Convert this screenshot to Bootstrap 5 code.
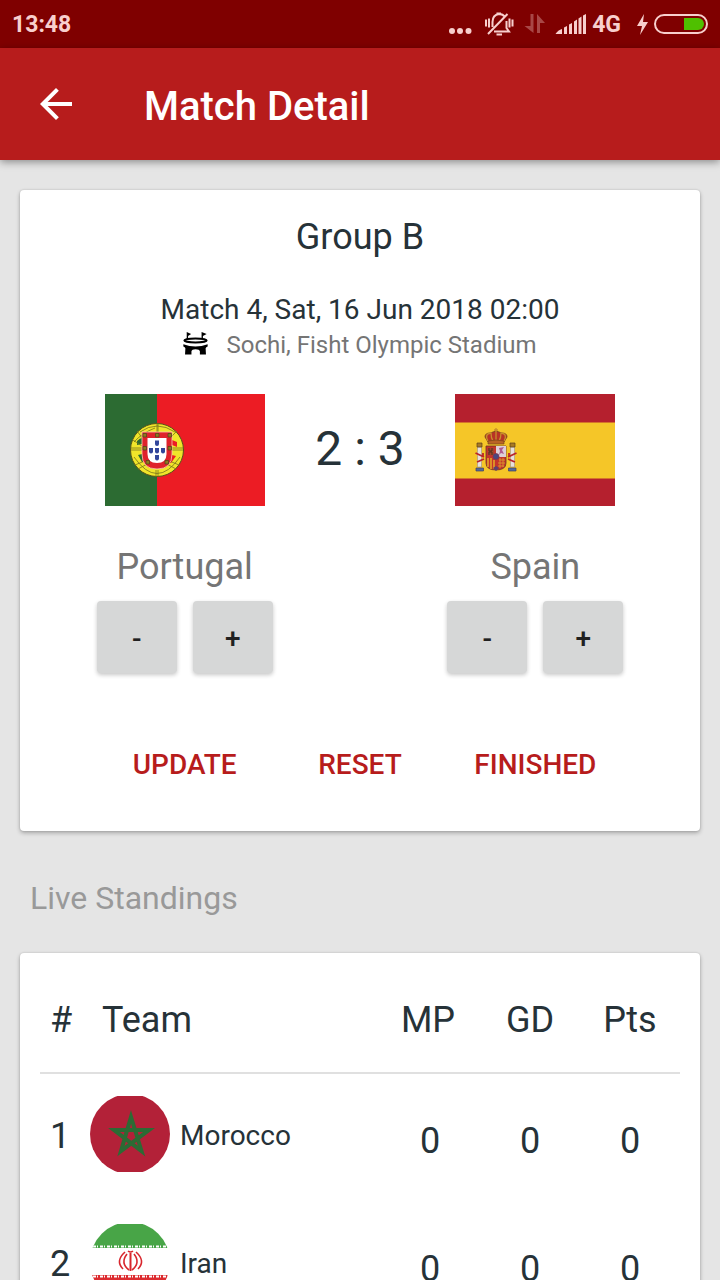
<!DOCTYPE html>
<html lang="en">
<head>
<meta charset="utf-8">
<meta name="viewport" content="width=device-width, initial-scale=1">
<title>Match Detail</title>
<link href="https://cdn.jsdelivr.net/npm/bootstrap@5.3.0/dist/css/bootstrap.min.css" rel="stylesheet">
<style>
  body { font-family: Roboto, "Noto Sans", sans-serif; color: #263238; background: #e5e5e5; }
  .status-bar { background: #7f0000; color: #f8cfcd; height: 48px; padding: 2px 12px 0; font-size: 23px; line-height: 28px; font-weight: 700; }
  .app-bar { background: #b71c1c; min-height: 112px; padding: 0 32px; position: relative; z-index: 1; box-shadow: 0 2px 8px rgba(0,0,0,.4); }
  .back-btn { width: 48px; height: 48px; border: 0; }
  .app-title { font-size: 40px; line-height: 48px; font-weight: 500; margin: 6px 0 0 64px; }
  .scroll-area { overflow-y: auto; scrollbar-width: none; padding: 30px 20px; }
  .scroll-area::-webkit-scrollbar { display: none; }
  .panel { border: 0; border-radius: 4px; box-shadow: 0 2px 4px rgba(0,0,0,.28), 0 0 2px rgba(0,0,0,.15); }
  .match-panel { padding: 26px 77px 30px; }
  .group-name { font-size: 36px; line-height: 42px; font-weight: 400; margin: 0 0 34px; }
  .match-time { font-size: 28px; line-height: 36px; white-space: nowrap; }
  .venue { font-size: 24px; line-height: 34px; color: #757575; gap: 18px; margin-bottom: 32px; white-space: nowrap; }
  .flag { width: 160px; height: 112px; }
  .score { font-size: 48px; line-height: 110px; }
  .team-name { font-size: 36px; line-height: 42px; color: #757575; margin: 40px 0 13px; }
  .step-btn { width: 80px; height: 72px; flex: none; border: 0; border-radius: 4px; padding: 4px 0 0; background: #d6d7d7; color: #212121; font-size: 28px; font-weight: 500; box-shadow: 0 2px 4px rgba(0,0,0,.22); }
  .actions { margin-top: 56px; }
  .action-btn { height: 72px; padding: 0; border: 0; color: #b71c1c; font-size: 28px; line-height: 36px; font-weight: 500; }
  .section-title { font-size: 32px; line-height: 42px; font-weight: 400; color: #999; margin: 46px 10px 34px; }
  .standings-panel { padding: 20px; }
  .standings { font-size: 36px; line-height: 42px; margin: 0; color: inherit; table-layout: fixed; }
  .standings th, .standings td { padding: 0; vertical-align: top; font-weight: 400; color: inherit; border: 0; }
  .standings thead th { height: 100px; padding-top: 26px; border-bottom: 2px solid #e0e0e0; }
  .standings tbody td { height: 129px; padding-top: 46px; text-align: center; }
  .standings tbody .rank, .standings tbody .club { padding-top: 41px; text-align: left; }
  .standings tbody .club { padding-top: 22px; }
  .standings .rank { padding-left: 10px; }
  .col-rank { width: 50px; }
  .col-stat { width: 100px; }
  .club-cell { gap: 10px; }
  .club-name { font-size: 28px; line-height: 34px; padding-top: 3px; }
  .round-flag { width: 80px; height: 76px; flex: none; }
</style>
</head>
<body>
<div class="vh-100 d-flex flex-column overflow-hidden">
  <div class="status-bar d-flex align-items-center justify-content-between flex-shrink-0">
    <span>13:48</span>
    <div class="d-flex align-items-center">
      <svg width="140" height="30" viewBox="0 0 140 30" fill="currentColor" aria-hidden="true">
        <circle cx="4" cy="21" r="3"/><circle cx="12" cy="21" r="3"/><circle cx="20.500" cy="21" r="3"/>
        <g fill="none" stroke="currentColor" stroke-width="2">
          <path d="M44.500 17V12Q44.500 5 51 4Q55 4 57 7M58.500 11V18L61 21.500H46M40 24 59.500 4"/>
          <path d="M38 9.500V16.500M41 8.500V17.500M61.500 8.500V17.500M64.500 9.500V16.500M48.500 3.500H53"/>
          <path d="M48.500 24.500H54"/>
        </g>
        <path opacity=".34" d="M82.500 4H85.500V23L76.500 16H82.500ZM89 23V4L97 13H92V23Z"/>
        <path d="M107.500 24Q110 20 114 19V24ZM116 17.500 119 16V24H116ZM121 14.500 124 13V24H121ZM126 11.500 129 9.500V24H126ZM130.500 8.500 133.500 6.500V24H130.500ZM135 5.500 138 4V24H135Z"/>
      </svg>
      <span class="ms-1">4G</span>
      <svg class="ms-3" width="71" height="30" viewBox="0 0 71 30" aria-hidden="true">
        <path d="M7 4 0 16H5L3 25 11 12H6Z" fill="currentColor"/>
        <rect x="18" y="5" width="52" height="18" rx="9" fill="none" stroke="currentColor" stroke-width="2"/>
        <path d="M47 8H61A6 6 0 0 1 61 20H47Z" fill="#4fc000"/>
      </svg>
    </div>
  </div>

  <header class="app-bar d-flex align-items-center text-white flex-shrink-0">
    <button type="button" class="back-btn btn p-0 text-white" aria-label="Back">
      <svg width="48" height="48" viewBox="0 0 24 24" fill="currentColor"><path d="M20 11H7.830l5.590-5.590L12 4l-8 8 8 8 1.410-1.410L7.830 13H20v-2z"/></svg>
    </button>
    <h1 class="app-title">Match Detail</h1>
  </header>

  <main class="scroll-area flex-grow-1">
    <section class="card panel match-panel text-center">
      <h2 class="group-name">Group B</h2>
      <div class="match-time d-flex justify-content-center">Match 4, Sat, 16 Jun 2018 02:00</div>
      <div class="venue d-flex justify-content-center align-items-center">
        <svg width="25" height="27" viewBox="0 0 74 80" aria-hidden="true">
          <path d="M11 0 24 6 15 12V21H11ZM55 0 70 6 59 12V21H55Z"/>
          <ellipse cx="37" cy="25" rx="33" ry="6" fill="none" stroke="#000" stroke-width="6"/>
          <path d="M1 36Q37 50 73 36V43Q68 45 67 48L68 67H50V57Q49 51 37 51Q26 51 25 57V67H6L7 48Q6 45 1 43Z"/>
        </svg>
        <span>Sochi, Fisht Olympic Stadium</span>
      </div>

      <div class="row g-0">
        <div class="col-4 d-flex flex-column align-items-center">
          <svg class="flag" viewBox="0 0 160 112" role="img" aria-label="Flag of Portugal">
            <path fill="#ec1c24" d="M0 0H160V112H0Z"/><path fill="#2c6b32" d="M0 0H52V112H0Z"/>
            <circle cx="52" cy="56" r="26.500" fill="#f0e52a" stroke="#55521a"/>
            <path fill="#2c6b32" d="M32 47Q35 44 37 44V50L32 51ZM33 61 37 60 41 68 37 68Z"/>
            <path fill="#ec1c24" d="M67 46 72 48V53L67 51ZM67 61 71 62 66 69 62 69Z"/>
            <g fill="none" stroke="#77721c" stroke-width=".8"><path d="M52 29V38M53 29V38M51 76V83M53 76V83M26 54H37M26 56H37M67 54H78M67 56H78M32 37 38 45M28 46 37 52M30 71 42 66M33 75 44 69M74 71 62 66M71 75 60 69M72 37 66 43M35 38Q52 26 70 38M29 63Q52 96 75 63M29 48Q37 39 50 34"/></g>
            <path d="M37 38H67V60Q67 75 52 75Q37 75 37 60Z" fill="#df222b" stroke="#f5c8ae" stroke-width=".8"/>
            <path d="M42.500 44H61.500V60Q61.500 69 52 69Q42.500 69 42.500 60Z" fill="#fff"/>
            <g fill="#32469b"><path id="esc" d="M50 46.500H54V50Q54 52 52 52Q50 52 50 50Z"/><use href="#esc" y="7.500"/><use href="#esc" x="-6" y="7.500"/><use href="#esc" x="6" y="7.500"/><use href="#esc" y="14.500"/></g>
            <g fill="#8d7a1e" stroke="#4d431a" stroke-width=".7"><path id="cas" d="M38 39.500H41.500V43H38Z"/><use href="#cas" x="12.500"/><use href="#cas" x="25"/><use href="#cas" y="13"/><use href="#cas" x="25" y="13"/><use href="#cas" x="3" y="27"/><use href="#cas" x="22" y="27"/></g>
          </svg>
          <div class="team-name">Portugal</div>
          <div class="d-flex gap-3">
            <button type="button" class="step-btn btn" aria-label="Portugal minus one">-</button>
            <button type="button" class="step-btn btn" aria-label="Portugal plus one">+</button>
          </div>
        </div>
        <div class="col-4 score">2 : 3</div>
        <div class="col-4 d-flex flex-column align-items-center">
          <svg class="flag" viewBox="0 0 160 112" role="img" aria-label="Flag of Spain">
            <path fill="#b5202e" d="M0 0H160V112H0Z"/><path fill="#f5c628" d="M0 28.500H160V84.500H0Z"/>
            <g id="pillar"><path d="M22.500 53H26.500V73H22.500Z" fill="#e7e0dc" stroke="#9b9188" stroke-width=".6"/><path d="M22 49H27V53H22Z" fill="#a87a24" stroke="#5d3c1a" stroke-width=".7"/><path d="M21 74H28.500V77H21Z" fill="#526a9b" stroke="#43415e" stroke-width=".7"/><path d="M20.500 59 29 63M22 68 29 65M28 59V63" fill="none" stroke="#b9252b" stroke-width="1.800"/></g>
            <use href="#pillar" transform="matrix(-1 0 0 1 82 0)"/>
            <path d="M31 52H51V69Q51 76 41 76Q31 76 31 69Z" fill="#c5352b" stroke="#6a3429" stroke-width=".8"/>
            <path d="M41 52H51V63H41Z" fill="#ddd0d8"/><path d="M44 54 49 53 47 56 49 60 46 59 44 61 45 57Z" fill="#ad5b91"/>
            <path d="M33 54H39V61H33Z" fill="#a4452a"/><path d="M34 54V57H37V54M34 61V58H37V61" fill="none" stroke="#4f3320"/>
            <path d="M33 64V73M36 64V75M39 66V75" stroke="#e9b626" stroke-width="1.400"/>
            <path d="M44 66H50M43 69H50M43 72H49M45 64V74M48 64V73" stroke="#d99b2c" stroke-width=".9"/>
            <circle cx="41" cy="62.500" r="3" fill="#4a4781" stroke="#7e3652" stroke-width=".8"/>
            <path d="M38 74 41 72 44 74 41 77Z" fill="#5d426e"/>
            <path d="M33 48 30 43Q30 39 35 39L41 37L47 39Q52 39 52 43L49 48Z" fill="#b83326" stroke="#73431d" stroke-width=".8"/>
            <path d="M41 34V47M39 36H43M33 47Q29 40 36 39Q36 44 38 47M49 47Q53 40 46 39Q46 44 44 47" fill="none" stroke="#c78f2a" stroke-width="1.300"/>
            <path d="M33 47Q41 45 49 47V50H33Z" fill="#ba6426" stroke="#784719" stroke-width=".7"/>
          </svg>
          <div class="team-name">Spain</div>
          <div class="d-flex gap-3">
            <button type="button" class="step-btn btn" aria-label="Spain minus one">-</button>
            <button type="button" class="step-btn btn" aria-label="Spain plus one">+</button>
          </div>
        </div>
      </div>

      <div class="row g-0 actions">
        <div class="col-4"><button type="button" class="action-btn btn">UPDATE</button></div>
        <div class="col-4"><button type="button" class="action-btn btn">RESET</button></div>
        <div class="col-4"><button type="button" class="action-btn btn">FINISHED</button></div>
      </div>
    </section>

    <h2 class="section-title">Live Standings</h2>

    <section class="card panel standings-panel">
      <table class="table table-borderless standings">
        <colgroup><col class="col-rank"><col><col class="col-stat"><col class="col-stat"><col class="col-stat"></colgroup>
        <thead>
          <tr><th class="rank" scope="col">#</th><th class="ps-2" scope="col"><span class="ms-1">Team</span></th><th class="text-center pe-1" scope="col">MP</th><th class="text-center" scope="col">GD</th><th class="text-center" scope="col">Pts</th></tr>
        </thead>
        <tbody>
          <tr>
            <td class="rank">1</td>
            <td class="club"><div class="club-cell d-flex align-items-center">
              <svg class="round-flag" viewBox="0 0 80 76" role="img" aria-label="Flag of Morocco">
                <defs><clipPath id="disc"><circle cx="40" cy="38" r="40"/></clipPath></defs>
                <path clip-path="url(#disc)" fill="#b32138" d="M0 0H80V76H0Z"/>
                <path d="M41 21 51.500 55 24 34H59L31 55Z" fill="none" stroke="#2c6b34" stroke-width="4"/>
              </svg>
              <span class="club-name">Morocco</span>
            </div></td>
            <td>0</td><td>0</td><td>0</td>
          </tr>
          <tr>
            <td class="rank">2</td>
            <td class="club"><div class="club-cell d-flex align-items-center">
              <svg class="round-flag" viewBox="0 0 80 76" role="img" aria-label="Flag of Iran">
                <g clip-path="url(#disc)"><path fill="#fff" d="M0 0H80V76H0Z"/><path fill="#48a547" d="M0 0H80V24H0Z"/><path fill="#dc2b2f" d="M0 51H80V76H0Z"/>
                <path d="M3 22.500H78M3 52.500H78" stroke="#fff" stroke-width="2" stroke-dasharray="3 1 1 2"/></g>
                <g fill="none" stroke="#d8262d" stroke-width="1.600"><path d="M40.500 29V47" stroke-width="2"/><path d="M35 28Q25 37 33 45M46 28Q56 37 48 45M37 30Q30 39 39 46M44 30Q51 39 42 46"/><path d="M38 27Q40.500 29 43 27"/></g>
              </svg>
              <span class="club-name">Iran</span>
            </div></td>
            <td>0</td><td>0</td><td>0</td>
          </tr>
        </tbody>
      </table>
    </section>
  </main>
</div>
<script src="https://cdn.jsdelivr.net/npm/bootstrap@5.3.0/dist/js/bootstrap.bundle.min.js"></script>
</body>
</html>
